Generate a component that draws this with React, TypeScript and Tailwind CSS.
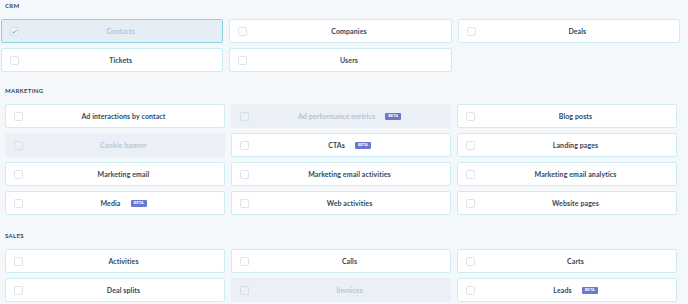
type Item = { name: string; beta?: boolean; disabled?: boolean; checked?: boolean };

const crm: Item[] = [
  { name: "Contacts", checked: true, disabled: true },
  { name: "Companies" },
  { name: "Deals" },
  { name: "Tickets" },
  { name: "Users" },
];

const marketing: Item[] = [
  { name: "Ad interactions by contact" },
  { name: "Ad performance metrics", beta: true, disabled: true },
  { name: "Blog posts" },
  { name: "Cookie banner", disabled: true },
  { name: "CTAs", beta: true },
  { name: "Landing pages" },
  { name: "Marketing email" },
  { name: "Marketing email activities" },
  { name: "Marketing email analytics" },
  { name: "Media", beta: true },
  { name: "Web activities" },
  { name: "Website pages" },
];

const sales: Item[] = [
  { name: "Activities" },
  { name: "Calls" },
  { name: "Carts" },
  { name: "Deal splits" },
  { name: "Invoices", disabled: true },
  { name: "Leads", beta: true },
];

function Tile({ item }: { item: Item }) {
  let box = "bg-white border-[#cdedf4]";
  if (item.checked) box = "bg-[#e5edf5] border-[#86d2de]";
  else if (item.disabled) box = "bg-[#eaf0f6] border-[#eaf0f6]";
  return (
    <div className={`flex h-6 items-center rounded-[2px] border pl-2 ${box}`}>
      <div
        className={`flex h-[9px] w-[9px] shrink-0 items-center justify-center rounded-[2px] border ${
          item.disabled ? "border-[#d7dfe8] bg-[#eef2f7]" : "border-[#dfe3eb] bg-white"
        }`}
      >
        {item.checked && (
          <svg viewBox="0 0 10 10" className="h-[7px] w-[7px]">
            <path d="M1.5 5.2 L4 7.5 L8.5 2.5" fill="none" stroke="#8fa3b8" strokeWidth="1.4" />
          </svg>
        )}
      </div>
      <div className="flex flex-1 items-center justify-center gap-[10px]">
        <span
          className={`text-[7px] font-bold leading-none tracking-[0.1px] ${
            item.disabled ? "text-[#b6c5d6]" : "text-[#33475b]"
          }`}
        >
          {item.name}
        </span>
        {item.beta && (
          <span className="flex h-[7px] w-4 items-center justify-center rounded-[1px] bg-[#6a78d1] text-[4px] font-bold leading-none text-white">
            BETA
          </span>
        )}
      </div>
    </div>
  );
}

function Heading({ children, className }: { children: string; className: string }) {
  return (
    <div className={`pl-[5px] text-[6px] font-bold leading-[8px] tracking-[0.3px] text-[#33475b] ${className}`}>
      {children}
    </div>
  );
}

export default function App() {
  return (
    <div
      className="h-[304px] w-[688px] overflow-hidden bg-[#f5f8fa]"
      style={{ fontFamily: "Lato, 'Noto Sans', sans-serif" }}
    >
      <Heading className="pt-[2px]">CRM</Heading>
      <div className="mt-[9px] grid grid-cols-3 gap-x-[6px] gap-y-[5px] pl-[1px] pr-2">
        {crm.map((i) => (
          <Tile key={i.name} item={i} />
        ))}
      </div>

      <Heading className="mt-[15px]">MARKETING</Heading>
      <div className="mt-[9px] grid grid-cols-3 gap-x-[6px] gap-y-[5px] pl-[5px] pr-[11px]">
        {marketing.map((i) => (
          <Tile key={i.name} item={i} />
        ))}
      </div>

      <Heading className="mt-[17px]">SALES</Heading>
      <div className="mt-[9px] grid grid-cols-3 gap-x-[6px] gap-y-[5px] pl-[5px] pr-[11px]">
        {sales.map((i) => (
          <Tile key={i.name} item={i} />
        ))}
      </div>
    </div>
  );
}
